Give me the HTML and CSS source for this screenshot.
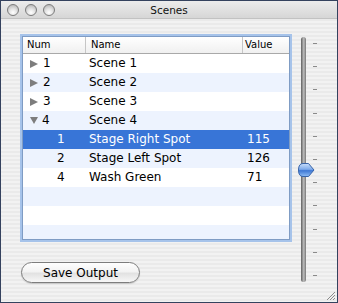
FILE: index.html
```html
<!DOCTYPE html>
<html lang="en">
<head>
  <meta charset="UTF-8">
  <title>Scenes</title>
  <link rel="stylesheet" href="styles.css">
</head>
<body>
  <div class="window">
    <!-- title bar -->
    <div class="titlebar">
      <div class="lights">
        <span class="light"></span>
        <span class="light"></span>
        <span class="light"></span>
      </div>
      <div class="title">Scenes</div>
      <div></div>
    </div>

    <div class="content">
      <div class="left">
        <!-- outline table -->
        <div class="frame">
          <div class="table">
            <div class="head">
              <span class="h-num">Num</span>
              <span class="h-name">Name</span>
              <span class="h-value">Value</span>
            </div>
            <div class="rows">
              <div class="row"><span class="num"><i class="tri"></i>1</span><span class="name">Scene 1</span><span class="value"></span></div>
              <div class="row"><span class="num"><i class="tri"></i>2</span><span class="name">Scene 2</span><span class="value"></span></div>
              <div class="row"><span class="num"><i class="tri"></i>3</span><span class="name">Scene 3</span><span class="value"></span></div>
              <div class="row"><span class="num"><i class="tri open"></i>4</span><span class="name">Scene 4</span><span class="value"></span></div>
              <div class="row child selected"><span class="num">1</span><span class="name">Stage Right Spot</span><span class="value">115</span></div>
              <div class="row child"><span class="num">2</span><span class="name">Stage Left Spot</span><span class="value">126</span></div>
              <div class="row child"><span class="num">4</span><span class="name">Wash Green</span><span class="value">71</span></div>
              <div class="row"></div>
              <div class="row"></div>
              <div class="row"></div>
            </div>
          </div>
        </div>
        <button class="save">Save Output</button>
      </div>

      <!-- vertical slider -->
      <div class="slider">
        <div class="track"></div>
        <div class="ticks">
          <span></span><span></span><span></span><span></span><span></span><span></span>
          <span></span><span></span><span></span><span></span><span></span>
        </div>
        <svg class="thumb" width="17" height="14" viewBox="0 0 17 14">
          <defs>
            <linearGradient id="tg" x1="0" y1="0" x2="0" y2="1">
              <stop offset="0" stop-color="#c9defa"/>
              <stop offset="0.45" stop-color="#7eaaea"/>
              <stop offset="0.55" stop-color="#3e78d4"/>
              <stop offset="1" stop-color="#8fbdf5"/>
            </linearGradient>
          </defs>
          <path d="M5,0.5 H10.5 L16,7 L10.5,13.5 H5 Q0.5,13.5 0.5,7 Q0.5,0.5 5,0.5 Z" fill="url(#tg)" stroke="#3763a8"/>
        </svg>
      </div>
    </div>

    <svg class="grip" width="11" height="11" viewBox="0 0 11 11">
      <path d="M10,2 L2,10 M10,5 L5,10 M10,8 L8,10" stroke="#8c8c8c" stroke-width="1"/>
    </svg>
  </div>
</body>
</html>
```

FILE: styles.css
```css
* {
  box-sizing: border-box;
}
body {
  margin: 0;
  font-family: "DejaVu Sans", sans-serif;
}
.window {
  position: relative;
  width: 338px;
  height: 303px;
  border: 1px solid #34425e;
  display: flex;
  flex-direction: column;
  background: repeating-linear-gradient(#f2f2f2 0 2px, #eaeaea 2px 4px);
}
.titlebar {
  height: 18px;
  display: grid;
  grid-template-columns: 1fr auto 1fr;
  align-items: center;
  background: linear-gradient(#ececec, #d6d6d6);
  border-bottom: 1px solid #c2c2c2;
}
.lights {
  display: flex;
  gap: 6px;
  padding-left: 6px;
}
.light {
  width: 12px;
  height: 12px;
  border-radius: 50%;
  border: 1px solid #7c7c7c;
  background: radial-gradient(circle at 50% 75%, #ffffff 0, #e4e4e4 40%, #b9b9b9 85%);
}
.title {
  font-size: 10.5px;
  color: #111;
}
.content {
  flex: 1;
  display: flex;
  padding: 15px 0 0 19px;
}
.left {
  display: flex;
  flex-direction: column;
  align-items: flex-start;
}
/* focus ring round the table */
.frame {
  width: 272px;
  height: 208px;
  border: 2px solid #a6c3ea;
  display: flex;
}
.table {
  flex: 1;
  border: 1px solid #7f9cc4;
  background: #fff;
  overflow: hidden;
}
.head,
.row {
  display: grid;
  grid-template-columns: 62px 157px 47px;
}
.head {
  height: 17px;
  line-height: 16px;
  font-size: 10px;
  border-bottom: 1px solid #a9a9a9;
  background: linear-gradient(#ffffff, #f0f0f0);
}
.head span + span {
  border-left: 1px solid #c6c6c6;
}
.h-num {
  padding-left: 4px;
}
.h-name {
  padding-left: 5px;
}
.h-value {
  padding-left: 2px;
}
.row {
  height: 19px;
  line-height: 19px;
  font-size: 12px;
  color: #000;
}
.rows .row:nth-child(even) {
  background: #edf3fe;
}
.rows .row.selected {
  background: #3875d7;
  color: #fff;
}
.num {
  display: flex;
  align-items: center;
  padding-left: 7px;
}
.child .num {
  padding-left: 34px;
}
.tri {
  width: 0;
  height: 0;
  margin-right: 5px;
  border-left: 8px solid #7d7d7d;
  border-top: 4px solid transparent;
  border-bottom: 4px solid transparent;
}
.tri.open {
  margin-right: 4px;
  border-left: 4.5px solid transparent;
  border-right: 4.5px solid transparent;
  border-top: 7px solid #7d7d7d;
  border-bottom: 0;
}
.name {
  padding-left: 4px;
}
.value {
  padding-left: 5px;
}
/* Aqua push button */
.save {
  margin: 20px 0 0 1px;
  width: 119px;
  height: 21px;
  padding: 0;
  border: 1px solid #7d7d7d;
  border-radius: 11px;
  background: linear-gradient(#fefefe 0%, #f3f3f3 45%, #e2e2e2 55%, #f7f7f7 100%);
  box-shadow: 0 1px 1px rgba(0,0,0,0.15);
  font-family: "DejaVu Sans", sans-serif;
  font-size: 12px;
  color: #000;
}
.slider {
  position: relative;
  display: flex;
  margin: 3px 0 0 6px;
  height: 245px;
}
.track {
  width: 5px;
  margin-left: 3px;
  border-radius: 3px;
  background: linear-gradient(90deg, #5f5f5f, #bdbdbd 55%, #777);
}
.ticks {
  display: flex;
  flex-direction: column;
  justify-content: space-between;
  padding: 6px 0;
  margin-left: 7px;
}
.ticks span {
  width: 4px;
  height: 1px;
  background: #8a8a8a;
}
.thumb {
  position: absolute;
  left: 0;
  top: 126px;
}
.grip {
  position: absolute;
  right: 1px;
  bottom: 1px;
}
```
